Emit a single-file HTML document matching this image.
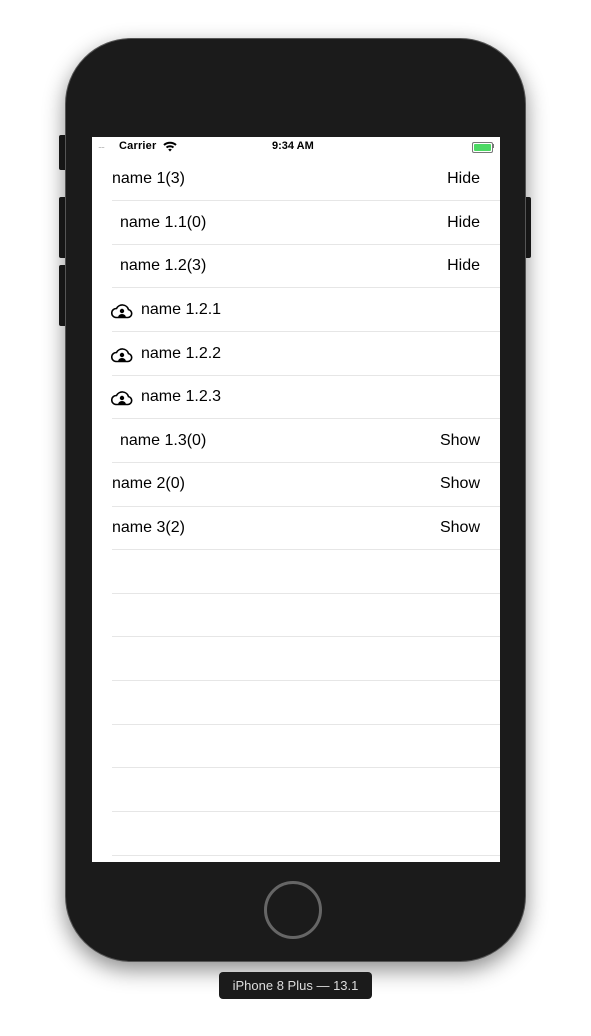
<!DOCTYPE html>
<html><head><style>
body{margin:0;width:591px;height:1036px;background:#fff;position:relative;overflow:hidden;font-family:"Liberation Sans",sans-serif}
.phone{position:absolute;left:65px;top:38px;width:461px;height:924px;background:#1b1b1b;border-radius:66px;box-shadow:0 8px 22px rgba(0,0,0,.45);border:1px solid #555;box-sizing:border-box}
.btn{position:absolute;background:#1b1b1b;border-radius:2px}
.screen{position:absolute;left:92px;top:137px;width:408px;height:725px;background:#fff;overflow:hidden}
.sb{position:absolute;top:0;left:0;width:408px;height:20px;font-size:11px;color:#000}
.row{position:absolute;left:0;width:408px;height:44px;font-size:16px;color:#000}
.row .t{position:absolute;top:13px}
.row .r{position:absolute;right:20px;top:13px}
.sep{position:absolute;left:20px;right:0;height:1px;background:#e6e6e6}
.home{position:absolute;left:264px;top:881px;width:58px;height:58px;border:3px solid #666;border-radius:50%;box-sizing:border-box}
.label{position:absolute;left:219px;top:972px;width:153px;height:27px;background:#1b1b1b;border-radius:4px;color:#ddd;font-size:13px;text-align:center;line-height:27px}
</style></head><body>
<div class="btn" style="left:59px;top:135px;width:8px;height:35px"></div>
<div class="btn" style="left:59px;top:197px;width:8px;height:61px"></div>
<div class="btn" style="left:59px;top:265px;width:8px;height:61px"></div>
<div class="btn" style="left:524px;top:197px;width:7px;height:61px"></div>
<div class="phone"></div>
<div class="screen">
<div class="sb">
<span style="position:absolute;left:6px;top:3px;color:#aaa;font-size:9px;letter-spacing:-1px">....</span>
<span style="position:absolute;left:27px;top:3px;font-weight:bold;letter-spacing:.2px">Carrier</span>
<svg style="position:absolute;left:71px;top:4px" width="14" height="11" viewBox="0 0 14 11"><path d="M1 4 A9 9 0 0 1 13 4" stroke="#000" stroke-width="2" fill="none"/><path d="M3.5 6.5 A5.5 5.5 0 0 1 10.5 6.5" stroke="#000" stroke-width="2" fill="none"/><path d="M7 10.5 L5.2 8.5 A2.5 2.5 0 0 1 8.8 8.5Z" fill="#000"/></svg>
<span style="position:absolute;left:180px;top:3px;font-weight:bold">9:34 AM</span>
<div style="position:absolute;left:380px;top:5px;width:17px;height:7px;border:1px solid #777;border-radius:2px;padding:1px;box-sizing:content-box"><div style="width:17px;height:7px;background:#4cd964;border-radius:1px"></div></div>
<div style="position:absolute;left:400px;top:7px;width:1.5px;height:4px;background:#777"></div>
</div>
<div class="row" style="top:20px"><span class="t" style="left:20px">name 1(3)</span><span class="r">Hide</span></div>
<div class="sep" style="top:63px"></div>
<div class="row" style="top:64px"><span class="t" style="left:28px">name 1.1(0)</span><span class="r">Hide</span></div>
<div class="sep" style="top:107px"></div>
<div class="row" style="top:107px"><span class="t" style="left:28px">name 1.2(3)</span><span class="r">Hide</span></div>
<div class="sep" style="top:150px"></div>
<div class="row" style="top:151px"><svg style="position:absolute;left:19px;top:15px" width="22" height="16" viewBox="0 0 22 16"><path d="M5 14.5 H17 A4 4 0 0 0 17.5 6.6 A6.5 6.5 0 0 0 5.5 5.5 A4.5 4.5 0 0 0 5 14.5Z" fill="none" stroke="#000" stroke-width="1.6"/><circle cx="11" cy="8" r="2.2"/><path d="M7 14.5 A4 3.5 0 0 1 15 14.5Z"/></svg><span class="t" style="left:49px">name 1.2.1</span></div>
<div class="sep" style="top:194px"></div>
<div class="row" style="top:195px"><svg style="position:absolute;left:19px;top:15px" width="22" height="16" viewBox="0 0 22 16"><path d="M5 14.5 H17 A4 4 0 0 0 17.5 6.6 A6.5 6.5 0 0 0 5.5 5.5 A4.5 4.5 0 0 0 5 14.5Z" fill="none" stroke="#000" stroke-width="1.6"/><circle cx="11" cy="8" r="2.2"/><path d="M7 14.5 A4 3.5 0 0 1 15 14.5Z"/></svg><span class="t" style="left:49px">name 1.2.2</span></div>
<div class="sep" style="top:238px"></div>
<div class="row" style="top:238px"><svg style="position:absolute;left:19px;top:15px" width="22" height="16" viewBox="0 0 22 16"><path d="M5 14.5 H17 A4 4 0 0 0 17.5 6.6 A6.5 6.5 0 0 0 5.5 5.5 A4.5 4.5 0 0 0 5 14.5Z" fill="none" stroke="#000" stroke-width="1.6"/><circle cx="11" cy="8" r="2.2"/><path d="M7 14.5 A4 3.5 0 0 1 15 14.5Z"/></svg><span class="t" style="left:49px">name 1.2.3</span></div>
<div class="sep" style="top:281px"></div>
<div class="row" style="top:282px"><span class="t" style="left:28px">name 1.3(0)</span><span class="r">Show</span></div>
<div class="sep" style="top:325px"></div>
<div class="row" style="top:325px"><span class="t" style="left:20px">name 2(0)</span><span class="r">Show</span></div>
<div class="sep" style="top:369px"></div>
<div class="row" style="top:369px"><span class="t" style="left:20px">name 3(2)</span><span class="r">Show</span></div>
<div class="sep" style="top:412px"></div>
<div class="sep" style="top:456px"></div>
<div class="sep" style="top:499px"></div>
<div class="sep" style="top:543px"></div>
<div class="sep" style="top:587px"></div>
<div class="sep" style="top:630px"></div>
<div class="sep" style="top:674px"></div>
<div class="sep" style="top:718px"></div>
</div>
<div class="home"></div>
<div class="label">iPhone 8 Plus — 13.1</div>
</body></html>
